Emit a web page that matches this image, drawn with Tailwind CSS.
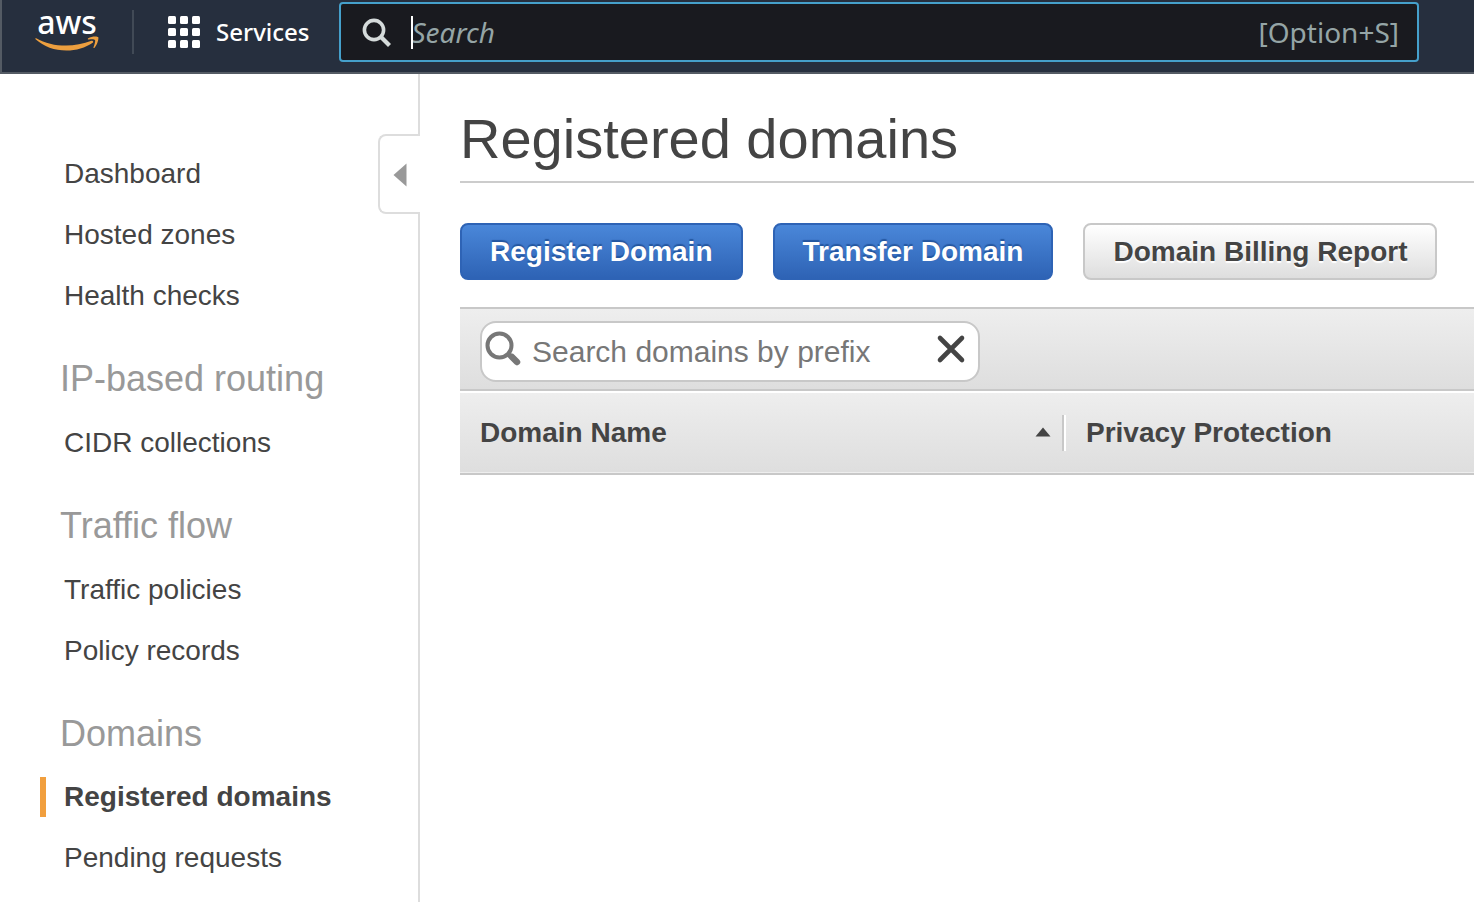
<!DOCTYPE html>
<html lang="en">
<head>
<meta charset="utf-8">
<meta name="viewport" content="width=device-width, initial-scale=1">
<title>Registered domains</title>
<script src="https://cdn.jsdelivr.net/npm/@tailwindcss/browser@4"></script>
</head>
<body class="flex min-h-screen flex-col bg-white font-['Liberation_Sans',Arial,sans-serif] text-[#444]">
  <header class="flex h-[74px] shrink-0 items-start border-b-2 border-l-2 border-[#545b64] bg-[#262f3e] pr-[55px] font-['Noto_Sans','Open_Sans',sans-serif]">
    <a href="#" aria-label="aws home" class="ml-[33px] flex w-16 flex-col items-center text-white">
      <span class="text-[32px] leading-11 font-medium">aws</span>
      <svg class="-mt-2 h-4 w-16" viewBox="0 0 64 16" fill="#ec9f3f" aria-hidden="true">
        <path d="M1.200 2.200C10 7.200 20 9.600 31 9.600C39.500 9.600 48.500 8 56.500 4.800C57.800 4.200 58.900 5.700 57.700 6.800C50.500 11.800 41 14.600 31.500 14.600C19.500 14.600 8.700 10.600.600 3.300C0 2.600.500 1.900 1.200 2.200Z"/>
        <path d="M53.200 2.200C56.500 0 62.500.100 63.200 1.100C64 2.300 62.600 8.500 59.600 11.700C59 12.300 58.100 11.900 58.500 11.200C59.600 8.700 60.600 5 60 4C59.200 3 56.500 3.200 53.900 3.500C53 3.600 52.300 2.900 53.200 2.200Z"/>
      </svg>
    </a>
    <div class="ml-[33px] mt-2.5 h-11 w-0.5 bg-[#414a56]"></div>
    <button type="button" class="ml-[34px] mt-3 flex h-10 items-center gap-4 text-2xl font-medium text-white">
      <svg class="size-8" viewBox="0 0 32 32" fill="currentColor" aria-hidden="true">
        <rect x="0" y="0" width="8" height="8" rx="1.500"/><rect x="12" y="0" width="8" height="8" rx="1.500"/><rect x="24" y="0" width="8" height="8" rx="1.500"/>
        <rect x="0" y="12" width="8" height="8" rx="1.500"/><rect x="12" y="12" width="8" height="8" rx="1.500"/><rect x="24" y="12" width="8" height="8" rx="1.500"/>
        <rect x="0" y="24" width="8" height="8" rx="1.500"/><rect x="12" y="24" width="8" height="8" rx="1.500"/><rect x="24" y="24" width="8" height="8" rx="1.500"/>
      </svg>
      Services
    </button>
    <label class="ml-[30px] mt-0.5 flex h-[60px] flex-1 items-center rounded border-2 border-[#45a0cb] bg-[#191a1f] pr-[18px] pl-5">
      <svg class="mt-0.5 size-8 text-[#d5dbdb]" viewBox="0 0 32 32" fill="none" stroke="currentColor" stroke-width="3.600" aria-hidden="true">
        <circle cx="13" cy="13" r="9.600"/><path d="M20 20L28.500 28.500" stroke-width="4.200"/>
      </svg>
      <span class="relative ml-[18px] flex flex-1">
        <input type="text" aria-label="Search" placeholder="Search" class="w-full bg-transparent text-[28px] leading-9 text-white outline-none placeholder:text-[#95a5a6] placeholder:italic">
        <span class="absolute top-0.5 left-0 h-[33px] w-0.5 bg-white"></span>
      </span>
      <span class="text-[28px] leading-9 text-[#95a5a6]">[Option+S]</span>
    </label>
  </header>

  <div class="flex flex-1">
    <aside class="relative w-[420px] shrink-0 border-r-2 border-[#ddd]">
      <nav class="pt-[69px] pl-10 text-[28px] leading-[61px]" aria-label="Route 53">
        <ul class="pl-6">
          <li><a href="#">Dashboard</a></li>
          <li><a href="#">Hosted zones</a></li>
          <li><a href="#">Health checks</a></li>
        </ul>
        <h2 class="pt-[33px] pb-[13px] pl-5 text-4xl leading-10 text-[#999]">IP-based routing</h2>
        <ul class="pl-6">
          <li><a href="#">CIDR collections</a></li>
        </ul>
        <h2 class="pt-[33px] pb-[13px] pl-5 text-4xl leading-10 text-[#999]">Traffic flow</h2>
        <ul class="pl-6">
          <li><a href="#">Traffic policies</a></li>
          <li><a href="#">Policy records</a></li>
        </ul>
        <h2 class="pt-[33px] pb-[13px] pl-5 text-4xl leading-10 text-[#999]">Domains</h2>
        <ul>
          <li class="flex h-[60px] items-center"><a href="#" aria-current="page" class="border-l-6 border-[#f19f3e] pl-[18px] leading-10 font-bold">Registered domains</a></li>
          <li class="pl-6"><a href="#">Pending requests</a></li>
        </ul>
      </nav>
      <button type="button" aria-label="Collapse navigation" class="absolute top-[60px] -right-0.5 flex h-20 w-[42px] items-center rounded-l-lg border-2 border-r-0 border-[#ddd] bg-white pl-[13px]">
        <svg class="mt-0.5 h-6 w-3.5" viewBox="0 0 14 24" fill="#999" aria-hidden="true"><path d="M13.500.500V23.500L.500 12Z"/></svg>
      </button>
    </aside>

    <main class="min-w-0 flex-1 pl-10">
      <h1 class="border-b-2 border-[#ccc] pt-8 pb-2.5 text-[56px] leading-[65px] whitespace-nowrap">Registered domains</h1>
      <div class="mt-10 flex gap-[30px] text-[28px] leading-[53px] font-bold whitespace-nowrap">
        <button type="button" class="rounded-lg border-2 border-[#2e63b5] bg-linear-to-b from-[#4a87d9] to-[#2e63b5] px-7 text-white text-shadow-[0_-2px_1px_#2457a0]">Register Domain</button>
        <button type="button" class="rounded-lg border-2 border-[#2e63b5] bg-linear-to-b from-[#4a87d9] to-[#2e63b5] px-7 text-white text-shadow-[0_-2px_1px_#2457a0]">Transfer Domain</button>
        <button type="button" class="rounded-lg border-2 border-[#c8c8c8] bg-linear-to-b from-white to-[#dedede] px-7 text-shadow-[0_2px_1px_#fff]">Domain Billing Report</button>
      </div>
      <div class="mt-[27px] border-y-2 border-[#c8c8c8] bg-linear-to-b from-[#eee] to-[#dedede] pt-3 pb-[7px] pl-5">
        <div class="flex h-[61px] w-[500px] items-center rounded-2xl border-2 border-[#c8c8c8] bg-white pr-[11px] pl-[3px]">
          <svg class="size-9 -mt-1.5 text-[#777]" viewBox="0 0 36 36" fill="none" stroke="currentColor" aria-hidden="true">
            <circle cx="14.500" cy="14.500" r="12" stroke-width="4"/><path d="M23.500 23.500L26 25.500" stroke-width="5"/><path d="M27 26L32 31" stroke-width="6.500" stroke-linecap="round"/>
          </svg>
          <input type="text" aria-label="Search domains by prefix" placeholder="Search domains by prefix" class="ml-[11px] min-w-0 flex-1 text-[30px] outline-none placeholder:text-[#777]">
          <button type="button" aria-label="Clear search" class="-mt-1.5">
            <svg class="size-8" viewBox="0 0 32 32" fill="none" stroke="#444" stroke-width="4.600" stroke-linecap="round" aria-hidden="true"><path d="M5 5L27 27M27 5L5 27"/></svg>
          </button>
        </div>
      </div>
      <table class="mt-0.5 w-full table-fixed text-left text-[28px] leading-9">
        <thead>
          <tr class="h-[81px] border-b-2 border-[#c8c8c8] bg-linear-to-b from-[#eee] to-[#dedede]">
            <th scope="col" aria-sort="ascending" class="w-[606px] p-0 pl-5">
              <div class="flex items-center border-r-2 border-white">
                <span class="flex flex-1 items-center justify-between border-r-2 border-[#c8c8c8] pr-[11px]">Domain Name
                  <svg class="mt-[-3px] h-2.5 w-4" viewBox="0 0 16 10" fill="#444" aria-hidden="true"><path d="M8 .500L15.500 9.500H.500Z"/></svg>
                </span>
              </div>
            </th>
            <th scope="col" class="p-0 pl-5 whitespace-nowrap">Privacy Protection</th>
          </tr>
        </thead>
      </table>
    </main>
  </div>
</body>
</html>
